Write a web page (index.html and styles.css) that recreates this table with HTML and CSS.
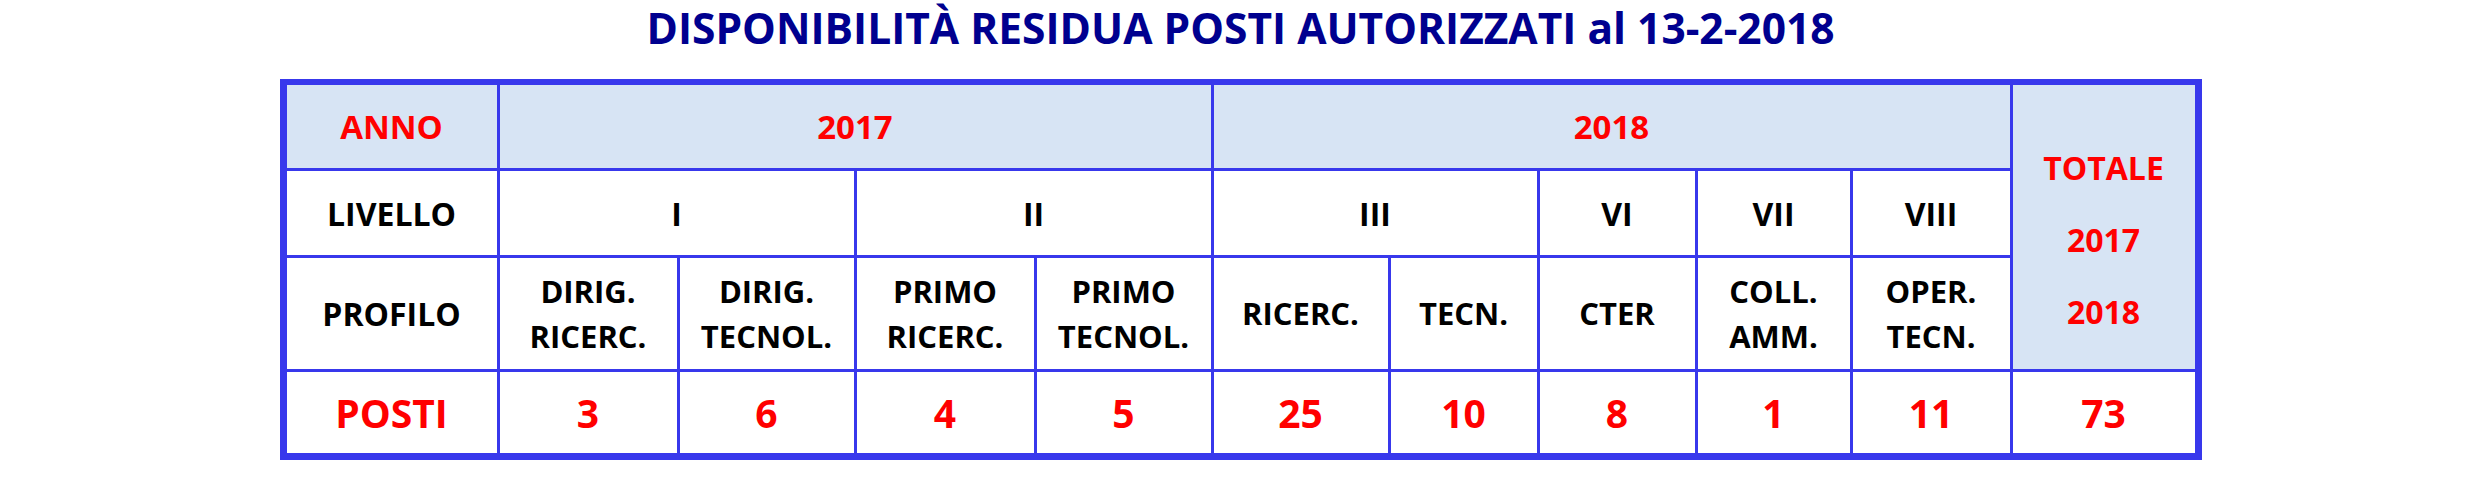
FILE: index.html
```html
<!DOCTYPE html>
<html lang="it">
<head>
<meta charset="utf-8">
<title>Disponibilità residua posti autorizzati</title>
<link rel="stylesheet" href="styles.css">
</head>
<body>
<div class="page">
  <h1 class="title">DISPONIBILITÀ RESIDUA POSTI AUTORIZZATI al 13-2-2018</h1>
  <div class="table">
    <div class="cell hd red">ANNO</div>
    <div class="cell hd red span4">2017</div>
    <div class="cell hd red span5">2018</div>
    <div class="cell hd red total"><span>TOTALE</span><span>2017</span><span>2018</span></div>

    <div class="cell lab">LIVELLO</div>
    <div class="cell lab span2">I</div>
    <div class="cell lab span2">II</div>
    <div class="cell lab span2">III</div>
    <div class="cell lab">VI</div>
    <div class="cell lab">VII</div>
    <div class="cell lab">VIII</div>

    <div class="cell lab">PROFILO</div>
    <div class="cell prof">DIRIG.<br>RICERC.</div>
    <div class="cell prof">DIRIG.<br>TECNOL.</div>
    <div class="cell prof">PRIMO<br>RICERC.</div>
    <div class="cell prof">PRIMO<br>TECNOL.</div>
    <div class="cell prof">RICERC.</div>
    <div class="cell prof">TECN.</div>
    <div class="cell prof">CTER</div>
    <div class="cell prof">COLL.<br>AMM.</div>
    <div class="cell prof">OPER.<br>TECN.</div>

    <div class="cell num">POSTI</div>
    <div class="cell num">3</div>
    <div class="cell num">6</div>
    <div class="cell num">4</div>
    <div class="cell num">5</div>
    <div class="cell num">25</div>
    <div class="cell num">10</div>
    <div class="cell num">8</div>
    <div class="cell num">1</div>
    <div class="cell num">11</div>
    <div class="cell num">73</div>
  </div>
</div>
</body>
</html>
```
FILE: styles.css
```css
html, body {
  margin: 0;
  padding: 0;
  background: #ffffff;
}

.page {
  font-family: "Open Sans", "DejaVu Sans", sans-serif;
  font-weight: 700;
  width: 2481px;
}

.title {
  margin: 3px 0 0;
  font-size: 42.5px;
  line-height: 50px;
  font-weight: 700;
  color: #00008f;
  text-align: center;
}

.table {
  display: grid;
  grid-template-columns: 210px 177px 174px 177px 174px 174px 146px 155px 152px 157px 182px;
  grid-template-rows: 83px 84px 111px 81px;
  gap: 3px;
  width: max-content;
  margin: 26px auto 0;
  background: #3838ec;
  border-style: solid;
  border-color: #3838ec;
  border-width: 6px 7px 7px 7px;
}

.cell {
  display: flex;
  align-items: center;
  justify-content: center;
  text-align: center;
  background: #ffffff;
  color: #000000;
}

.hd {
  background: #d7e4f4;
  font-size: 33px;
}

.red {
  color: #ff0000;
}

.span2 { grid-column: span 2; }
.span4 { grid-column: span 4; }
.span5 { grid-column: span 5; }

.total {
  grid-row: span 3;
  flex-direction: column;
  padding-top: 26px;
  line-height: 72px;
  font-size: 32px;
}

.lab {
  font-size: 32px;
}

.prof {
  font-size: 31px;
  line-height: 45px;
}

.num {
  font-size: 39px;
  color: #ff0000;
}
```
